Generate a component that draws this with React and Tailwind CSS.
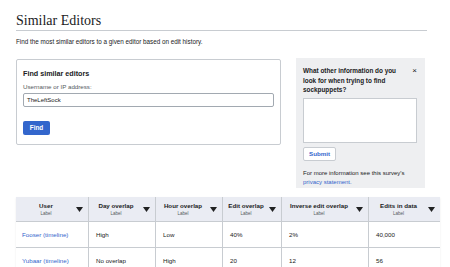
import React from "react";

const columns = [
  { name: "User", w: "w-[72px]" },
  { name: "Day overlap", w: "w-[67px]" },
  { name: "Hour overlap", w: "w-[67px]" },
  { name: "Edit overlap", w: "w-[59px]" },
  { name: "Inverse edit overlap", w: "w-[87px]" },
  { name: "Edits in data", w: "w-[72px]" },
];

const rows = [
  { user: "Fooser", cells: ["High", "Low", "40%", "2%", "40,000"] },
  { user: "Yubaar", cells: ["No overlap", "High", "20", "12", "56"] },
];

const Caret = () => (
  <svg width="7" height="5" viewBox="0 0 7 5" className="shrink-0">
    <path d="M0 0 L7 0 L3.5 5 Z" fill="#202122" />
  </svg>
);

const App = () => {
  return (
    <div className="w-[450px] h-[267px] overflow-hidden bg-white text-[#202122] font-['Liberation_Sans',Arial,sans-serif]">
      <div className="pl-4 pt-[12px]">
        <h1 className="w-[411px] border-b border-[#c8ccd1] font-['Liberation_Serif',serif] text-[14px] leading-[18px]">
          Similar Editors
        </h1>
        <p className="mt-[7px] text-[6.3px] leading-[8px]">
          Find the most similar editors to a given editor based on edit history.
        </p>

        <div className="mt-[13px] flex gap-[15px]">
          <div className="w-[265px] h-[86px] rounded-[2px] border border-[#c8ccd1] px-[6px] pt-[9px]">
            <div className="text-[7.2px] leading-[9px] font-bold">Find similar editors</div>
            <div className="mt-[5px] text-[6.2px] leading-[8px] text-[#54595d]">Username or IP address:</div>
            <div className="mt-[2px] h-[14px] w-[251px] rounded-[2px] border border-[#a2a9b1] bg-white px-[3px] flex items-center text-[6px]">
              TheLeftSock
            </div>
            <button className="mt-[14px] h-[14px] w-[27px] rounded-[2px] bg-[#3366cc] text-white text-[6.4px] font-bold flex items-center justify-center">
              Find
            </button>
          </div>

          <div className="w-[129px] h-[130px] -mt-[1px] bg-[#eeeff1] pl-[7px] pr-[8px] pt-[8px]">
            <div className="flex">
              <div className="w-[102px] text-[6.4px] leading-[9.5px] font-bold">
                What other information do you look for when trying to find sockpuppets?
              </div>
              <div className="ml-auto pt-[1px] text-[8px] leading-[8px] text-[#202122]">×</div>
            </div>
            <div className="mt-[3px] h-[45px] w-[114px] border border-[#c8ccd1] bg-white" />
            <button className="mt-[4px] h-[14px] w-[33px] rounded-[2px] border border-[#c8ccd1] bg-white text-[#3366cc] text-[6.2px] font-bold flex items-center justify-center">
              Submit
            </button>
            <p className="mt-[8px] text-[6px] leading-[9.5px]">
              For more information see this survey's <span className="text-[#3366cc]">privacy statement.</span>
            </p>
          </div>
        </div>

        <div className="mt-[9px] w-[424px] shadow-[0_1px_2px_rgba(0,0,0,0.08)]">
          <div className="flex h-[25px] bg-[#eaecf3] border-b border-[#c8ccd1]">
            {columns.map((c, i) => (
              <div
                key={c.name}
                className={`${c.w} flex items-center pr-[5px] ${i > 0 ? "border-l border-[#c8ccd1]" : ""}`}
              >
                <div className="flex-1 text-center">
                  <div className="text-[6.2px] leading-[8px] font-bold">{c.name}</div>
                  <div className="text-[4.5px] leading-[7px] text-[#54595d]">Label</div>
                </div>
                <Caret />
              </div>
            ))}
          </div>
          {rows.map((r) => (
            <div key={r.user} className="flex h-[26px] border-b border-[#c8ccd1] text-[6.2px]">
              <div className="w-[72px] flex items-center px-[6px] text-[#3366cc]">
                {r.user}&nbsp;(timeline)
              </div>
              {r.cells.map((v, i) => (
                <div
                  key={i}
                  className={`${columns[i + 1].w} flex items-center px-[7px] border-l border-[#c8ccd1]`}
                >
                  {v}
                </div>
              ))}
            </div>
          ))}
        </div>
      </div>
    </div>
  );
};

export default App;
